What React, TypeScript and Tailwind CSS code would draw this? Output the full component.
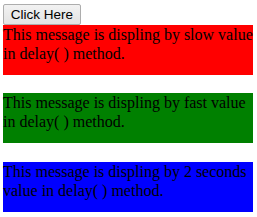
const box = "w-[250px] h-[50px] text-black text-[16px] leading-[19px] font-['Liberation_Serif','Times_New_Roman',serif]";

export default function App() {
  return (
    <div className="flex flex-col items-start pl-[3px] pt-[4px] bg-white min-h-screen">
      <button className="w-[78px] h-[21px] border border-[#adadad] rounded-[2px] bg-gradient-to-b from-[#f2f2f2] to-[#e3e3e3] text-[13.5px] text-black leading-none font-['Liberation_Sans',Arial,sans-serif]">
        Click Here
      </button>
      <div className={`${box} bg-[#ff0000]`}>
        This message is displing by slow value in delay( ) method.
      </div>
      <div className={`${box} mt-[18px] bg-[#008000]`}>
        This message is displing by fast value in delay( ) method.
      </div>
      <div className={`${box} mt-[19px] bg-[#0000ff]`}>
        This message is displing by 2 seconds value in delay( ) method.
      </div>
    </div>
  );
}
